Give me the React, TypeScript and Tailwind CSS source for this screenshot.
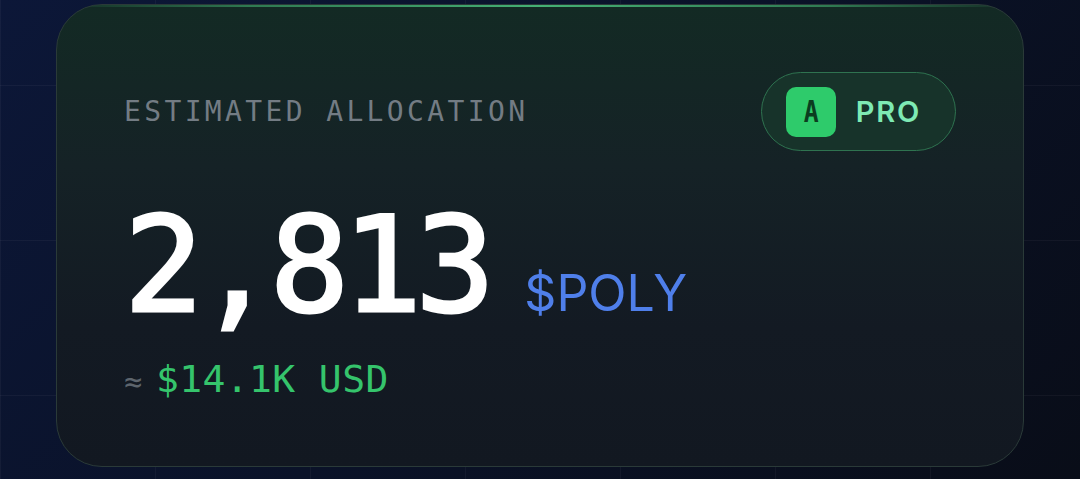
export default function App() {
  return (
    <div className="min-h-[479px] w-full overflow-hidden bg-[linear-gradient(to_right,#ffffff0a_1px,transparent_1px),linear-gradient(to_bottom,#ffffff0a_1px,transparent_1px),linear-gradient(135deg,#0c1738_0%,#0a1228_50%,#090d18_100%)] bg-[size:155px_155px,155px_155px,100%_100%] bg-[position:0px_-70px,0px_-70px,0px_0px] pt-1">
      <div className="relative mx-auto h-[463px] w-[968px] overflow-hidden rounded-[46px] border border-[#2a3a38] bg-[linear-gradient(180deg,#132a24_0%,#152226_35%,#131a23_70%,#121821_100%)] px-[67px] pt-[67px]">
        {/* top glow line */}
        <div className="absolute inset-x-0 top-0 h-[2px] bg-[linear-gradient(to_right,transparent_0%,#2f7a52_20%,#45b075_50%,#2f7a52_80%,transparent_100%)]" />

        {/* Header */}
        <div className="flex items-center justify-between">
          <span className="font-['DejaVu_Sans_Mono',monospace] text-[28px] uppercase leading-none tracking-[0.12em] text-[#737c84]">
            Estimated Allocation
          </span>
          <div className="flex h-[79px] items-center gap-5 rounded-full border-[1.5px] border-[#2f7350] bg-[#17332a] pl-6 pr-[34px]">
            <div className="flex h-[50px] w-[50px] items-center justify-center rounded-[10px] bg-[#2ecb6b]">
              <span className="font-['DejaVu_Sans_Mono',monospace] text-[31px] font-bold leading-none text-[#0b3d1f] [transform:scaleX(0.8)]">
                A
              </span>
            </div>
            <span className="font-['Inter',sans-serif] text-[29px] font-semibold leading-none tracking-[0.06em] text-[#7eeab4]">
              PRO
            </span>
          </div>
        </div>

        {/* Amount */}
        <div className="mt-[48px] flex items-baseline">
          <span className="font-['DejaVu_Sans_Mono',monospace] text-[132px] font-normal leading-none tracking-[-0.05em] text-white [-webkit-text-stroke:3px_white]">
            2,813
          </span>
          <span className="ml-[36px] font-['Inter',sans-serif] text-[50px] font-normal leading-none text-[#4f7fea]">
            $POLY
          </span>
        </div>

        {/* USD */}
        <div className="mt-[29px] flex items-baseline gap-[14px]">
          <span className="font-['DejaVu_Sans_Mono',monospace] text-[30px] leading-none text-[#5d656d]">
            ≈
          </span>
          <span className="font-['DejaVu_Sans_Mono',monospace] text-[38px] leading-none tracking-[0.01em] text-[#35c46c]">
            $14.1K USD
          </span>
        </div>
      </div>
    </div>
  )
}
